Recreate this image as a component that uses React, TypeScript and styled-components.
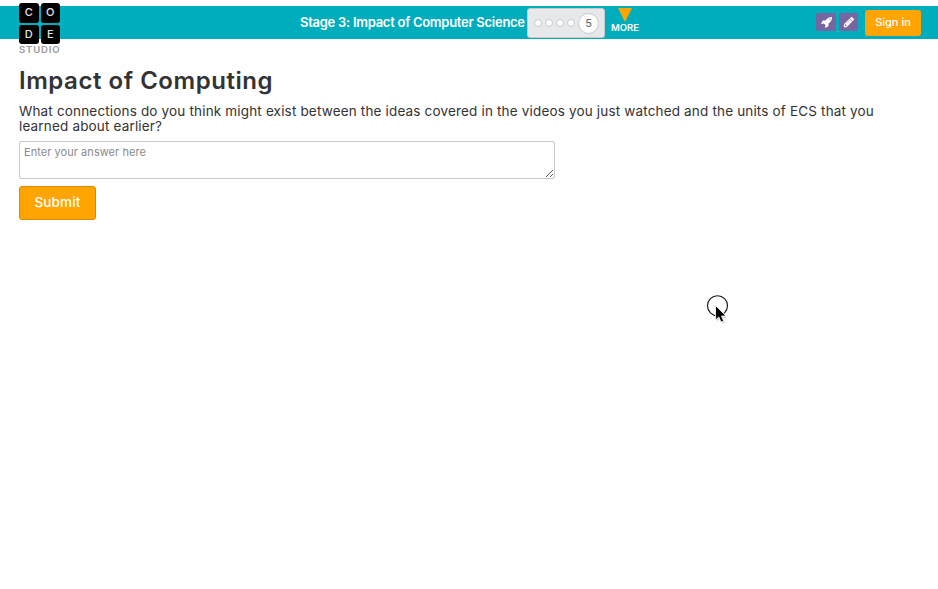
import React from "react";
import styled, { createGlobalStyle } from "styled-components";

const GlobalStyle = createGlobalStyle`
  * { box-sizing: border-box; }
  html, body { margin: 0; background: #fefefe; overflow: hidden; }
  body { font-family: Inter, "Liberation Sans", sans-serif; color: #333; }
`;

const Page = styled.div`
  position: relative;
  height: 589px;
  padding-top: 6px;
`;

const Header = styled.header`
  display: flex;
  height: 33px;
  background: #00adbc;
  padding-left: 19px;
`;

const Logo = styled.div`
  width: 42px;
  height: 52px;
  margin-top: -3px;
  flex: none;
`;

const LogoGrid = styled.div`
  display: grid;
  grid-template-columns: 19.5px 19.5px;
  grid-template-rows: 19.5px 19.5px;
  gap: 2px;
`;

const LogoTile = styled.span`
  display: flex;
  align-items: center;
  justify-content: center;
  background: #000;
  border-radius: 3px;
  color: #e4e4e4;
  font: 500 11px/1 Inter, sans-serif;
`;

const LogoCaption = styled.div`
  margin-top: 1px;
  color: #999;
  font: 600 9.5px/10px Inter, sans-serif;
  letter-spacing: 0.85px;
  white-space: nowrap;
`;

const StageTitle = styled.div`
  width: 227px;
  margin-left: 239px;
  color: #fff;
  font-size: 13px;
  font-weight: 600;
  line-height: 32px;
  letter-spacing: -0.27px;
  white-space: nowrap;
`;

const Progress = styled.div`
  display: flex;
  align-items: center;
  gap: 3px;
  width: 78px;
  height: 30px;
  margin-top: 2px;
  padding-left: 6px;
  background: #e7e8ea;
  border: 1px solid #c6cacd;
  border-radius: 3px;
`;

const Dot = styled.span`
  width: 8px;
  height: 8px;
  background: #fefefe;
  border: 1px solid #c6cacd;
  border-radius: 50%;
`;

const CurrentStep = styled.span`
  display: flex;
  align-items: center;
  justify-content: center;
  width: 21px;
  height: 21px;
  background: #fefefe;
  border: 1px solid #c6cacd;
  border-radius: 50%;
  color: #5b6770;
  font-size: 11px;
`;

const More = styled.div`
  display: flex;
  flex-direction: column;
  align-items: center;
  width: 28px;
  margin-left: 6px;
  padding-top: 2px;
  color: #fff;
  font-size: 9.5px;
  font-weight: 600;
  line-height: 12px;
`;

const MoreArrow = styled.span`
  border: 7px solid transparent;
  border-top: 14px solid #ffa400;
  border-bottom: 0;
`;

const Actions = styled.div`
  display: flex;
  margin-left: auto;
  padding-right: 17px;
`;

const IconButton = styled.button<{ $width: number }>`
  display: flex;
  align-items: center;
  justify-content: center;
  width: ${(p) => p.$width}px;
  height: 18px;
  margin: 7px 3px 0 0;
  padding: 0;
  border: 0;
  border-radius: 2px;
  background: #7665a0;
  color: #fff;
`;

const SignIn = styled.button`
  width: 56px;
  height: 26px;
  margin: 4px 0 0 4px;
  padding: 0 0 1px;
  border: 0;
  border-radius: 3px;
  background: #ffa400;
  color: #fff;
  font: 500 11px/1 Inter, sans-serif;
`;

const Main = styled.main`
  padding: 26px 19px 0;
`;

const Title = styled.h1`
  margin: 0;
  color: #333;
  font-size: 24px;
  font-weight: 600;
  line-height: 32px;
  letter-spacing: 0.54px;
  white-space: nowrap;
`;

const Question = styled.p`
  margin: 7px 0 0;
  font-size: 13.5px;
  line-height: 15px;
  letter-spacing: 0.167px;
  white-space: nowrap;
`;

const Line = styled.span`
  display: block;
`;

const AnswerBox = styled.div`
  position: relative;
  width: 536px;
  height: 38px;
  margin-top: 7px;
`;

const Answer = styled.textarea`
  display: block;
  width: 100%;
  height: 100%;
  padding: 3px 4px;
  border: 1px solid #c8c8c8;
  border-radius: 2px;
  background: #fefefe;
  font: 400 11px/15px Inter, sans-serif;
  letter-spacing: 0.05px;
  resize: none;
  overflow: hidden;
  &::placeholder { color: #8c8c8c; opacity: 1; }
`;

const Grip = styled.svg`
  position: absolute;
  right: 2px;
  bottom: 2px;
`;

const Submit = styled.button`
  width: 77px;
  height: 34px;
  margin-top: 7px;
  padding: 0 0 1px;
  border: 1px solid #d98c00;
  border-radius: 3px;
  background: #ffa400;
  color: #fff;
  font: 500 13.5px/1 Inter, sans-serif;
  letter-spacing: 0.15px;
`;

const Pointer = styled.svg`
  position: absolute;
  left: 704px;
  top: 292px;
`;

const ROCKET =
  "M1440 320q0-40-28-68t-68-28-68 28-28 68 28 68 68 28 68-28 28-68zm224-288q0 249-75.5 430.5t-253.5 360.5q-81 80-195 176l-20 379q-2 16-16 26l-384 224q-7 4-16 4-12 0-23-9l-64-64q-13-14-8-32l85-276-281-281-276 85q-3 1-9 1-14 0-23-9l-64-64q-17-19-5-39l224-384q10-14 26-16l379-20q96-114 176-195 188-187 358-258t431-71q14 0 24 9.5t10 22.5z";
const PENCIL =
  "M491 1536l91-91-235-235-91 91v107h128v128h107zm523-928q0-22-22-22-10 0-17 7l-542 542q-7 7-7 17 0 22 22 22 10 0 17-7l542-542q7-7 7-17zm-54-192l416 416-832 832h-416v-416zm683 96q0 53-37 90l-166 166-416-416 166-165q36-38 90-38 53 0 91 38l235 234q37 39 37 91z";

export default function App() {
  return (
    <Page>
      <GlobalStyle />
      <Header>
        <Logo>
          <LogoGrid>
            {["C", "O", "D", "E"].map((c) => (
              <LogoTile key={c}>{c}</LogoTile>
            ))}
          </LogoGrid>
          <LogoCaption>STUDIO</LogoCaption>
        </Logo>
        <StageTitle>Stage 3: Impact of Computer Science</StageTitle>
        <Progress>
          <Dot />
          <Dot />
          <Dot />
          <Dot />
          <CurrentStep>5</CurrentStep>
        </Progress>
        <More>
          <MoreArrow />
          MORE
        </More>
        <Actions>
          <IconButton $width={20} aria-label="Launch">
            <svg width="11" height="11" viewBox="0 0 1664 1664" fill="currentColor">
              <path d={ROCKET} />
            </svg>
          </IconButton>
          <IconButton $width={19} aria-label="Edit">
            <svg width="12" height="12" viewBox="0 0 1792 1792" fill="currentColor">
              <path d={PENCIL} />
            </svg>
          </IconButton>
          <SignIn>Sign in</SignIn>
        </Actions>
      </Header>
      <Main>
        <Title>Impact of Computing</Title>
        <Question>
          <Line>
            What connections do you think might exist between the ideas covered in the videos you just watched and the units of ECS that you
          </Line>
          <Line>learned about earlier?</Line>
        </Question>
        <AnswerBox>
          <Answer placeholder="Enter your answer here" />
          <Grip width="7" height="7" viewBox="0 0 7 7" stroke="#555" strokeWidth="1">
            <path d="M0 7L7 0M4 7L7 4" />
          </Grip>
        </AnswerBox>
        <Submit>Submit</Submit>
      </Main>
      <Pointer width="28" height="34" viewBox="0 0 28 34">
        <circle cx="13.5" cy="13.7" r="10" fill="none" stroke="#111" strokeWidth="1.1" />
        <path
          d="M12 14.5V28.5L15 25.7L17.2 30.5L19.8 29.4L17.8 24.8H21.5Z"
          transform="translate(1 1)"
          fill="#bbb"
          opacity="0.6"
        />
        <path
          d="M11.5 13.5V28L14.8 25L17 30L19.6 28.9L17.5 24H22Z"
          fill="#000"
          stroke="#fff"
          strokeWidth="0.8"
        />
      </Pointer>
    </Page>
  );
}
